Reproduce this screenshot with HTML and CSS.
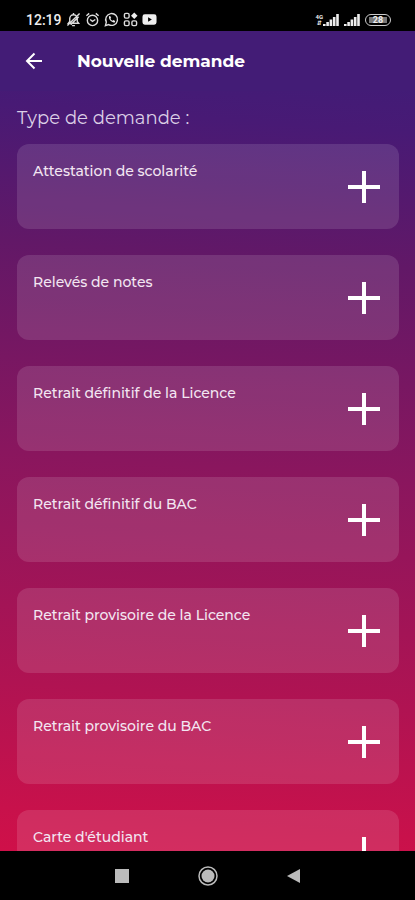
FILE: index.html
```html
<!doctype html>
<html lang="fr">
	<head>
		<meta charset="UTF-8">
		<meta name="viewport" content="width=device-width, initial-scale=1">
		<title>Nouvelle demande</title>
		<link rel="stylesheet" href="styles.css">
	</head>
	<body>
		<div class="status">
			<span class="time">12:19</span>
			<div class="icons">
				<svg width="15" height="15" viewBox="0 0 16 16"><path d="M2.500 12h11l-1.500-2V7a4 4 0 0 0-8 0v3zM6.500 14.500h3M8 1v2M1.500 14.500L14.500 1.500M5 13.500L13.500 5"/></svg>
				<svg width="15" height="15" viewBox="0 0 16 16"><circle cx="8" cy="9" r="5.500"/><path d="M1.500 4l3-2.500M14.500 4l-3-2.500M5.500 8l2.500 2 3-2"/></svg>
				<svg width="15" height="15" viewBox="0 0 16 16"><path d="M1.500 14.500l1-3.700a6.300 6.300 0 1 1 2.500 2.600z"/><path class="fill" d="M5.400 4.500l1.200-.2 1 2-.8 1c.6 1 1.200 1.600 2.200 2.100l1-.9 1.900 1-.3 1.300c-2 1.500-7.300-2.800-6.200-6.300z"/></svg>
				<svg width="15" height="15" viewBox="0 0 16 16"><rect x="1.500" y="1.500" width="5" height="5" rx="1.500"/><path class="fill" d="M12 .5L15.500 4 12 7.500 8.500 4z"/><rect x="1.500" y="9.500" width="5" height="5" rx="1.500"/><rect x="9.500" y="9.500" width="5" height="5" rx="1.500"/></svg>
				<svg width="15" height="15" viewBox="0 0 16 16"><path class="fill" fill-rule="evenodd" d="M3 2.500h10a2.500 2.500 0 0 1 2.500 2.500v6a2.500 2.500 0 0 1-2.500 2.500H3A2.500 2.500 0 0 1 .5 11V5A2.500 2.500 0 0 1 3 2.500zM6.500 5.500v5l4-2.500z"/></svg>
			</div>
			<div class="signals">
				<span class="net">4G<br>⇵</span>
				<svg width="16" height="12" viewBox="0 0 16 12"><path class="fill" d="M0 10h2.600v2H0zM3.300 8h2.600v4H3.300zM6.600 5.500h2.600V12H6.600zM9.900 3h2.600v9H9.900zM13.200 0h2.600v12h-2.600z"/></svg>
				<svg class="second" width="16" height="12" viewBox="0 0 16 12"><path class="fill" d="M0 10h2.600v2H0zM3.300 8h2.600v4H3.300zM6.600 5.500h2.600V12H6.600zM9.900 3h2.600v9H9.900zM13.200 0h2.600v12h-2.600z"/></svg>
				<span class="battery">28</span>
			</div>
		</div>
		<div class="app">
			<header class="bar">
				<button class="back" aria-label="Retour">
					<svg width="18" height="18" viewBox="0 0 18 18"><path d="M17 9H2M9.500 1.500L2 9l7.500 7.500"/></svg>
				</button>
				<h1>Nouvelle demande</h1>
			</header>
			<main>
				<h2>Type de demande :</h2>
				<div class="list">
					<button class="card"><span>Attestation de scolarité</span><i class="plus"></i></button>
					<button class="card"><span>Relevés de notes</span><i class="plus"></i></button>
					<button class="card"><span>Retrait définitif de la Licence</span><i class="plus"></i></button>
					<button class="card"><span>Retrait définitif du BAC</span><i class="plus"></i></button>
					<button class="card"><span>Retrait provisoire de la Licence</span><i class="plus"></i></button>
					<button class="card"><span>Retrait provisoire du BAC</span><i class="plus"></i></button>
					<button class="card"><span>Carte d'étudiant</span><i class="plus"></i></button>
				</div>
			</main>
		</div>
		<nav class="navbar">
			<button aria-label="Applications récentes"><svg width="22" height="22" viewBox="0 0 22 22"><path d="M4 4h14v14H4z"/></svg></button>
			<button aria-label="Accueil"><svg width="22" height="22" viewBox="0 0 22 22"><circle cx="11" cy="11" r="6.500"/><circle class="ring" cx="11" cy="11" r="9"/></svg></button>
			<button aria-label="Précédent"><svg width="22" height="22" viewBox="0 0 22 22"><path d="M4 11l13-7v14z"/></svg></button>
		</nav>
	</body>
</html>
```
FILE: styles.css
```css
*{margin:0;padding:0;box-sizing:border-box;}
body{
	height:100vh;
	display:flex;
	flex-direction:column;
	background:#000;
	color:#fff;
	font-family:Montserrat,Inter,"Open Sans",sans-serif;
	overflow:hidden;
}
button{
	border:0;
	background:none;
	color:inherit;
	font-family:inherit;
	cursor:pointer;
}
svg{
	display:block;
	fill:none;
	stroke:#ddd;
	stroke-width:1.5;
}
.fill{
	fill:#eee;
	stroke:none;
}
/* status bar */
.status{
	flex:none;
	height:31px;
	padding:8px 24px 0 26px;
	display:flex;
	align-items:center;
	color:#eee;
}
.time{
	font:500 14px/20px Roboto,sans-serif;
}
.icons{
	display:flex;
	gap:4px;
	margin-left:4px;
}
.signals{
	display:flex;
	align-items:center;
	margin-left:auto;
}
.net{
	font:bold 6px/6px Roboto,"DejaVu Sans",sans-serif;
	text-align:center;
}
.second{
	margin-left:5px;
}
.battery{
	width:26px;height:12px;
	margin-left:5px;
	border:1px solid #ccc;
	border-radius:6px;
	background:linear-gradient(#777,#777) 3px 2px/18px 6px no-repeat;
	font:bold 9px/10px Roboto,sans-serif;
	text-align:center;
}
/* screen */
.app{
	flex:1;
	min-height:0;
	overflow:hidden;
	background:linear-gradient(184deg,#3b1e79 0%,#481a75 12%,#621867 28%,#8a165e 53%,#b01352 80%,#c8114b 95%,#cf1049 100%);
}
.bar{
	height:60px;
	padding:0 25px;
	display:flex;
	align-items:center;
	gap:34px;
	background:#431c76;
}
.back svg{
	stroke:#fff;
	stroke-width:2;
}
.bar h1{
	font-size:17px;
	line-height:24px;
	font-weight:700;
}
main{
	padding:15px 16px 0 17px;
}
main h2{
	margin-bottom:14px;
	font-size:18px;
	line-height:24px;
	font-weight:400;
	color:#dccfe6;
}
.list{
	display:flex;
	flex-direction:column;
	gap:26px;
}
.card{
	width:100%;height:85px;
	padding:17px 19px 16px 16px;
	display:flex;
	justify-content:space-between;
	align-items:center;
	border-radius:12px;
	background:rgba(255,255,255,.12);
	font-size:14px;
	line-height:20px;
	font-weight:500;
	color:#f3e6f2;
	text-align:left;
}
.card span{
	align-self:flex-start;
}
.plus{
	width:32px;height:32px;
	background:linear-gradient(#fff,#fff) center/32px 4px no-repeat,linear-gradient(#fff,#fff) center/4px 32px no-repeat;
}
/* android buttons */
.navbar{
	flex:none;
	height:49px;
	display:flex;
	justify-content:center;
	align-items:center;
	gap:64px;
}
.navbar svg{
	fill:#bbb;
	stroke:none;
}
.navbar .ring{
	fill:none;
	stroke:#bbb;
	stroke-width:1.5;
}
```
